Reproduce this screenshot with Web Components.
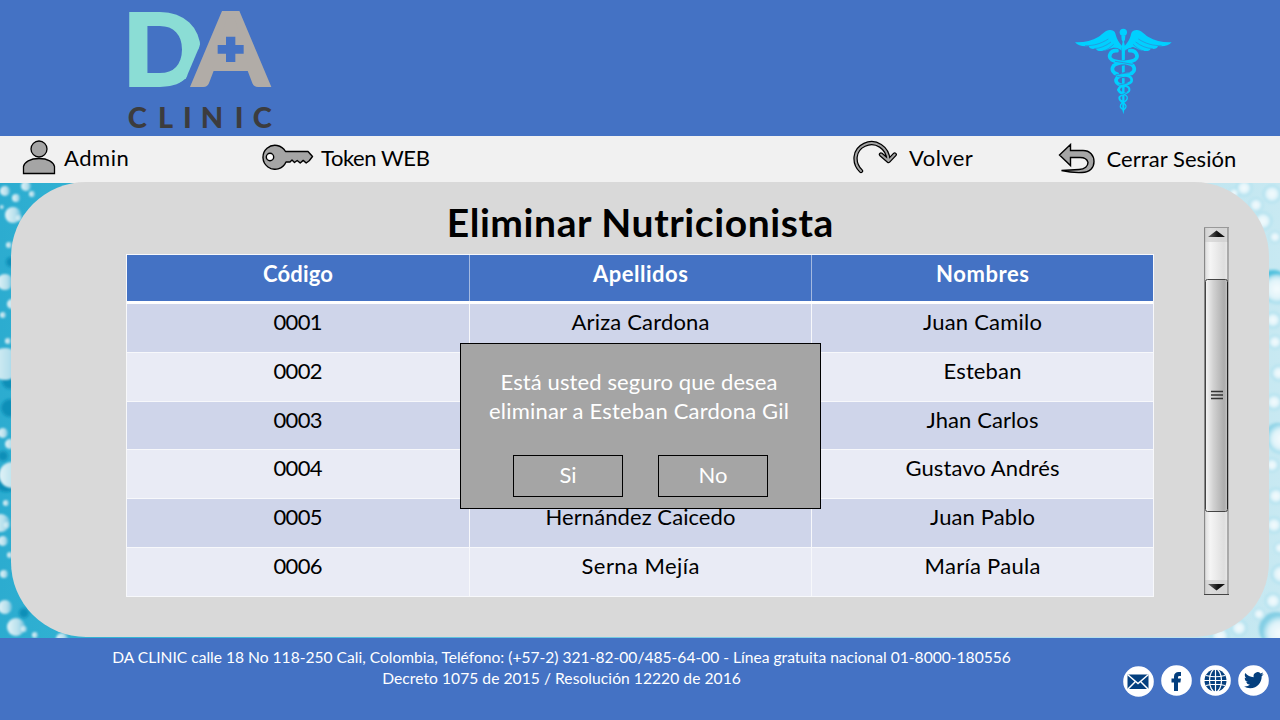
<!DOCTYPE html>
<html lang="es">
<head>
<meta charset="utf-8">
<title>DA Clinic – Eliminar Nutricionista</title>
<style>
html,body{margin:0;height:100%;overflow:hidden}
body{font-family:Lato,"Open Sans",sans-serif;font-size:22px;color:#000}
</style>
</head>
<body>
<clinic-page></clinic-page>
<script>
const define = (name, html, init) => customElements.define(name, class extends HTMLElement {
  connectedCallback() {
    if (this.shadowRoot) return;
    const t = document.createElement('template');
    t.innerHTML = typeof html === 'function' ? html(this) : html;
    this.attachShadow({mode: 'open'}).append(t.content.cloneNode(true));
    if (init) init(this);
  }
});

/* One line of text, tracked to a given width. */
define('fit-text', el => `<style>:host{display:inline-block;white-space:pre}span{display:inline-block}</style><span>${el.getAttribute('text')}</span>`, el => {
  const s = el.shadowRoot.querySelector('span');
  const em = parseFloat(getComputedStyle(s).fontSize);
  const n = el.getAttribute('text').length;
  const ls = (+el.getAttribute('w') + em * .04 - s.getBoundingClientRect().width) / (n - 1);
  s.style.letterSpacing = ls + 'px';
  s.style.marginRight = -ls + 'px';
});

define('clinic-logo', `<style>:host{display:block;width:180px;height:136px}svg{display:block;overflow:visible}text{font-family:Lato,sans-serif;font-weight:900}</style>
<svg width="180" height="136" viewBox="0 0 540 408">
<defs><clipPath id="cut"><path d="M40 20H300L268 140 228 235 190 264 150 280H40Z"/></clipPath></defs>
<g clip-path="url(#cut)"><text transform="translate(37 259) scale(1.045 1)" font-size="305" fill="#8bddd5" stroke="#8bddd5" stroke-width="6">D</text></g>
<text x="243" y="262" font-size="313" textLength="238" lengthAdjust="spacingAndGlyphs" fill="#b1aca7">A</text>
<path fill="#b1aca7" d="M350 55H374L420 213H305Z"/>
<path fill="#4472c4" d="M348 110h28v25h25v26h-25v25h-28v-25h-25v-26h25z"/>
<g font-size="87" fill="#3c3c3e"><text x="53" y="384">C</text><text x="144" y="384">L</text><text x="219" y="384">I</text><text x="272" y="384">N</text><text x="374" y="384">I</text><text x="428" y="384">C</text></g>
</svg>`);

define('caduceus-mark', `<style>:host{display:block;width:130px;height:110px}svg{display:block}</style>
<svg width="130" height="110" viewBox="0 0 390 330">
<g fill="#00d0ff"><circle cx="190" cy="52" r="11"/><path d="M184 62h12l-1 12-3 6 3 14-2 190-3 14-3-14-2-190 3-14-3-6z"/>
<g id="wing"><path d="M186 93C176 81 171 72 168 62c-2-11-6-16-17-17-15-1-22 12-35 20-21 13-44 18-71 17 8 10 24 13 41 11 1 8 12 10 22 8 2 7 11 9 23 6 14-2 20-9 33-9 12 0 18 6 20 9z"/>
<path d="M75 92c27 0 46-5 70-20M101 101c20-1 36-8 52-20M128 108c14-3 22-10 33-20" fill="none" stroke="#4472c4" stroke-width="1.600"/></g>
<use href="#wing" transform="matrix(-1 0 0 1 380 0)"/></g>
<g fill="none" stroke-linecap="round">
<g stroke="#4472c4" stroke-width="16"><path d="M219 104c14 5 17 23 4 31-18 9-48 7-59 17"/><path d="M211 150c14 4 15 18 4 24-15 7-37 6-44 15"/></g>
<g stroke="#00d0ff" stroke-width="11">
<path d="M171 107c-19-3-29 17-16 27 15 10 52 6 64 18 9 12 1 23-11 25-18 4-36 3-40 17-1 12 14 17 22 18"/>
<path d="M209 107c19-3 29 17 16 27-15 10-52 6-64 18-9 12-1 23 11 25"/></g>
<g stroke="#00d0ff" stroke-width="8"><path d="M187 179c15 2 30 6 28 18-2 13-36 10-39 26 0 10 10 12 16 13"/><path d="M185 210c14 2 25 5 23 16s-28 10-30 22c0 8 7 11 12 12" stroke-width="6"/><path d="M173 224c5 13 29 12 29 25 0 11-15 12-20 20-4 9 4 13 9 15" stroke-width="4"/><path d="M183 260c8 4 16 7 15 15-1 6-5 8-8 10" stroke-width="4"/></g>
<g stroke="#4472c4" stroke-width="2"><path d="M166 139q25 4 51 9M168 179q22-4 40-6M172 184q23 4 35 9M177 210q17-3 25-6M178 240q12 0 22-8"/></g></g>
</svg>`);

const icons = {
 user: [34, 36, '<g fill="#a5a5a5" stroke="#000" stroke-width="1.3"><circle cx="17" cy="9" r="8"/><path d="M1.500 33.500V26.500C2.500 22 8 18.500 17 18.500S31.500 22 32.500 26.500V33.500Z"/></g>'],
 key: [52, 26, '<path fill="#a5a5a5" stroke="#000" stroke-width="1.4" stroke-linejoin="round" d="M23.500 7.500A12 12 0 1 0 24 18H28l2-2 2.500 2.500 2.700-2 3 2.500 3-2.600 3 2.600 3-2.200L50.500 12.500 46 7.500Z"/><circle cx="8" cy="13" r="3.700" fill="#fff" stroke="#000" stroke-width="1.4"/>'],
 redo: [46, 36, '<g fill="none" stroke-linecap="round" stroke-linejoin="round"><path stroke="#000" stroke-width="4.400" d="M9 31C1 23 1.500 10 12.500 4.800S36 7.500 36.500 20.500M29 14.500 36.500 21 42.700 14.500"/><path stroke="#a5a5a5" stroke-width="1.900" d="M9 31C1 23 1.500 10 12.500 4.800S36 7.500 36.500 20.500M29 14.500 36.500 21 42.700 14.500"/></g>'],
 undo: [38, 32, '<path fill="#a5a5a5" stroke="#000" stroke-width="1.400" d="M1.500 12 12.500 1.500V7.500H25C32 7.500 36 12.500 36 18.500S32 29.500 24 29.500Q14 30 3.500 27.500L21 26.500C27 26.500 30 23 30 19.500 29 15.500 26 14.500 22 14.500H12.500V22.500Z"/>']
};
define('menu-item', el => { const [w, h, d] = icons[el.getAttribute('icon')];
 return `<style>:host{display:flex;align-items:flex-start;height:100%}svg{display:block;flex:none;margin-top:var(--it,3px)}div{margin-left:var(--gap,8px);padding-top:var(--tt,7px);line-height:30px;height:30px}</style>
 <svg width="${w}" height="${h}" viewBox="0 0 ${w} ${h}">${d}</svg><div><fit-text w="${el.getAttribute('w')}" text="${el.getAttribute('text')}"></fit-text></div>`; });

define('clinic-nav', `<style>:host{display:grid;grid-template-columns:240px 590px 206px 1fr;height:47px;padding-left:22px;background:#f1f1f1;box-sizing:border-box}</style>
<menu-item icon="user" text="Admin" w="64" style="--it:4px"></menu-item>
<menu-item icon="key" text="Token WEB" w="108" style="--it:8px;--gap:7px"></menu-item>
<menu-item icon="redo" text="Volver" w="63" style="--it:4px;--gap:11px"></menu-item>
<menu-item icon="undo" text="Cerrar Sesión" w="129" style="--it:7px;--gap:10.500px;--tt:8px"></menu-item>`);

/* Droplets on a teal-to-pale water surface. */
define('water-backdrop', el => {
 const drop = (x, y, r, side) => `<circle cx="${x}" cy="${y}" r="${r}" fill="url(#${side})"/>`;
 const left = [[5,8,5],[26,3,5],[16,15,4],[32,11,3],[13,32,8],[19,35,3],[2,24,2],[9,62,3],[5,99,8],[12,121,5],[3,132,3],[8,158,3],[5,181,16],[3,250,5],[10,261,5],[12,292,13],[6,320,3],[1,340,9],[7,342,3],[3,358,5],[10,372,3],[4,391,4],[5,424,7],[16,444,9],[24,446,3],[35,452,3],[62,456,6]];
 const right = [[1244,5,8],[1256,22,7],[1234,10,5],[1272,11,9],[1263,38,9],[1275,54,6],[1277,106,15],[1273,137,8],[1275,159,7],[1279,190,8],[1274,219,8],[1282,256,15],[1272,282,7],[1276,313,8],[1274,342,8],[1280,365,6],[1281,391,10],[1273,418,8],[1259,431,6],[1280,450,17],[1239,445,8],[1220,453,9]];
 return `<style>:host{display:block}svg{display:block}</style>
<svg width="1280" height="455" viewBox="0 0 1280 455"><defs>
<linearGradient id="bg"><stop offset="0" stop-color="#2cacd0"/><stop offset=".1" stop-color="#35b5d4"/><stop offset=".85" stop-color="#b3e0ee"/><stop offset="1" stop-color="#c8e9f2"/></linearGradient>
<linearGradient id="l" x2="1"><stop stop-color="#e2f3f8"/><stop offset=".65" stop-color="#b5dfec"/><stop offset="1" stop-color="#66bedb"/></linearGradient>
<radialGradient id="r"><stop stop-color="#f6fcfe"/><stop offset=".65" stop-color="#dff3f9"/><stop offset="1" stop-color="#98d8ea"/></radialGradient>
<filter id="b"><feGaussianBlur stdDeviation=".9"/></filter><filter id="b2"><feGaussianBlur stdDeviation="1.5"/></filter></defs>
<path fill="url(#bg)" d="M0 0H1280V455H0Z"/>
<g fill="#0d8fb8" filter="url(#b2)"><circle cx="11" cy="79" r="5"/><circle cx="10" cy="198" r="8"/><circle cx="10" cy="225" r="9"/><circle cx="6" cy="297" r="12"/><circle cx="24" cy="430" r="5"/><circle cx="3" cy="273" r="5"/></g>
<circle cx="1273" cy="102" r="15" fill="#4bbfdd" filter="url(#b2)"/><circle cx="1277" cy="252" r="12" fill="#8fd3e6" filter="url(#b2)"/><circle cx="1276" cy="446" r="17" fill="#83cee4" filter="url(#b2)"/>
<g filter="url(#b)">${left.map(c => drop(...c, 'l')).join('')}</g><g filter="url(#b2)">${right.map(c => drop(...c, 'r')).join('')}</g></svg>`; });

define('data-cell', el => { const t = el.getAttribute('text'); return `<style>:host{display:block;text-align:center;line-height:30px;padding-top:var(--pt,3px);box-sizing:border-box;min-width:0;overflow:hidden}</style>${t ? `<fit-text w="${el.getAttribute('w')}" text="${t}"></fit-text>` : ''}`; });

const rows = [
 [['Ariza Cardona',137],['Juan Camilo',118]], [null,['Esteban',77]], [null,['Jhan Carlos',111]],
 [null,['Gustavo Andrés',153]], [['Hernández Caicedo',189],['Juan Pablo',104]], [['Serna Mejía',117],['María Paula',115]]
];
const cell = c => c ? `<data-cell text="${c[0]}" w="${c[1]}"></data-cell>` : '<data-cell></data-cell>';
define('data-table', `<style>:host{display:block;border:1px solid #f7f8fb;box-sizing:border-box;width:1028px;height:343px;background:#f7f8fb}
.r{display:grid;grid-template-columns:342px 341px 341px;column-gap:1px}
.h{font-weight:bold;color:#fff;background:#a4b9e0;border-bottom:3px solid #fff;--pt:4px}.h data-cell{background:#4472c4;height:46px}
.b{display:grid;grid-template-rows:repeat(6,1fr);row-gap:1px;height:292px}.b data-cell{background:#cfd5ea}.b .r:nth-child(even) data-cell{background:#e9ebf5}</style>
<div class="r h">${cell(['Código',69])}${cell(['Apellidos',94])}${cell(['Nombres',92])}</div>
<div class="b">${rows.map((r, i) => `<div class="r">${cell(['000' + (i + 1), 48])}${cell(r[0])}${cell(r[1])}</div>`).join('')}</div>`);

define('scroll-rail', `<style>:host{display:block;width:25px;height:368px}svg{display:block}</style>
<svg width="25" height="368" viewBox="0 0 25 368"><defs><linearGradient id="t"><stop stop-color="#d8d8d8"/><stop offset=".25" stop-color="#f5f5f5"/><stop offset=".8" stop-color="#dedede"/><stop offset="1" stop-color="#eee"/></linearGradient>
<linearGradient id="k"><stop stop-color="#f5f5f5"/><stop offset=".35" stop-color="#d2d2d2"/><stop offset=".85" stop-color="#adadad"/><stop offset="1" stop-color="#c5c5c5"/></linearGradient><linearGradient id="a"><stop stop-color="#666"/><stop offset=".6" stop-color="#111"/></linearGradient></defs>
<path fill="url(#t)" d="M0 0h25v368H0z"/><path fill="#ccc" opacity=".6" d="M1 1h23v14H1zM1 353h23v14H1z"/><path d="M.5 0V368M24 0V368" stroke="#888" stroke-width="1.300"/><path d="M0 .5H25" stroke="#999"/><path d="M0 367.500H25" stroke="#444"/>
<rect x="1.500" y="52.500" width="22" height="232" rx="2" fill="url(#k)" stroke="#444"/><path d="M23.500 55V282" stroke="#222"/>
<path fill="url(#a)" d="M4 10 12.500 3.500 21 10zM4 357l8.500 6.500L21 357z"/><path stroke="#333" stroke-width="1.300" d="M7 164.500h12M7 168h12M7 171.500h12"/></svg>`);

define('choice-button', el => `<style>:host{display:block;box-sizing:border-box;width:110px;height:42px;border:1px solid #000;text-align:center;line-height:30px;padding-top:4px}</style><fit-text w="${el.getAttribute('w')}" text="${el.getAttribute('text')}"></fit-text>`);
define('confirm-dialog', `<style>:host{display:block;box-sizing:border-box;width:361px;height:166px;border:1px solid #000;background:#a5a5a5;color:#fff;text-align:center;padding-top:23px}
p{margin:0 3px 0 0;line-height:29px;height:29px}.a{display:flex;justify-content:center;gap:35px;margin-top:30px}</style>
<p><fit-text w="276" text="Está usted seguro que desea"></fit-text></p><p><fit-text w="299" text="eliminar a Esteban Cardona Gil"></fit-text></p>
<div class="a"><choice-button w="16" text="Si"></choice-button><choice-button w="28" text="No"></choice-button></div>`);

define('work-panel', `<style>:host{display:block;position:relative;box-sizing:border-box;margin:-1px 11px 0;height:455px;border-radius:75px;background:#d9d9d9;padding-left:115px}
.g{display:flex;gap:50px}h1{margin:0;padding-top:16px;height:56px;line-height:48px;font-size:39px;text-align:center;font-weight:bold}scroll-rail{margin-top:45px}.c{width:1028px}
confirm-dialog{position:absolute;left:449px;top:161px}</style>
<div class="g"><div class="c"><h1><fit-text w="385" text="Eliminar Nutricionista"></fit-text></h1><data-table></data-table></div><scroll-rail></scroll-rail></div><confirm-dialog></confirm-dialog>`);

const social = {
 mail: '<path fill="#043f7e" d="M4.500 8.500h21v14.500h-21z"/><path fill="none" stroke="#fff" stroke-width="1.500" d="m4.500 8.500 10.500 9L25.500 8.500M4.500 23.500l7.500-7.500M25.500 23.500 18 16"/>',
 face: '<path fill="#043f7e" d="M13 26V17.500h-2.500V13.500H13V11.500C13 8.500 15 7 17.500 7H20v4h-1.700q-1.300 0-1.300 1.300V13.500H20l-.6 4H17V26Z"/>',
 globe: '<circle cx="15.500" cy="15.500" r="11" fill="#043f7e"/><path fill="none" stroke="#fff" stroke-width="1.200" d="M15.500 4V27M4 15.500H27M6 10.500Q15.500 13 25 10.500M6 20.500Q15.500 18 25 20.500"/><ellipse cx="15.500" cy="15.500" rx="6" ry="11.500" fill="none" stroke="#fff" stroke-width="1.200"/>',
 bird: '<path fill="#043f7e" transform="translate(6 7) scale(.82)" d="M23.950 2.570a10 10 0 0 1-2.820.77 4.960 4.960 0 0 0 2.160-2.720c-.950.560-2 .960-3.120 1.180a4.920 4.920 0 0 0-8.390 4.480C7.690 6.100 4.070 4.130 1.640 1.160a4.820 4.820 0 0 0-.67 2.480c0 1.710.870 3.210 2.190 4.100a4.900 4.900 0 0 1-2.230-.62v.06a4.920 4.920 0 0 0 3.950 4.830 5 5 0 0 1-2.210.08 4.940 4.940 0 0 0 4.600 3.420A9.870 9.870 0 0 1 0 17.540a14 14 0 0 0 7.550 2.210c9.050 0 14-7.500 14-13.990 0-.21 0-.42-.02-.63a9.940 9.940 0 0 0 2.420-2.560z"/>'
};
define('social-icon', el => `<style>:host{display:block;width:31px;height:31px}svg{display:block}</style><svg width="31" height="31" viewBox="0 0 31 31"><circle cx="15.500" cy="15.500" r="15.300" fill="#fff"/>${social[el.getAttribute('kind')]}</svg>`);
define('clinic-footer', `<style>:host{display:flex;height:82px;background:#4472c4;color:#fff;box-sizing:border-box;padding:9px 11px 0 112px;font-size:15.600px}
.t{width:899px;text-align:center}p{margin:0;line-height:21px;height:21px}nav{display:flex;gap:7.500px;margin:18px 0 0 auto}social-icon:first-child{margin-top:1px}social-icon:nth-child(-n+3){margin-left:-.300px}</style>
<div class="t"><p><fit-text w="898" text="DA CLINIC calle 18 No 118-250 Cali, Colombia, Teléfono: (+57-2) 321-82-00/485-64-00 - Línea gratuita nacional 01-8000-180556"></fit-text></p><p><fit-text w="358" text="Decreto 1075 de 2015 / Resolución 12220 de 2016"></fit-text></p></div>
<nav><social-icon kind="mail"></social-icon><social-icon kind="face"></social-icon><social-icon kind="globe"></social-icon><social-icon kind="bird"></social-icon></nav>`);

define('clinic-page', `<style>:host{display:grid;grid-template-rows:136px 47px 455px 82px;grid-template-columns:1280px;height:720px;overflow:hidden}
header{display:flex;justify-content:space-between;background:#4472c4;padding:0 90px 0 110px}caduceus-mark{margin-top:15px}
main{display:grid;grid-template:455px / 1280px}water-backdrop,work-panel{grid-area:1/1}</style>
<header><clinic-logo></clinic-logo><caduceus-mark></caduceus-mark></header><clinic-nav></clinic-nav>
<main><water-backdrop></water-backdrop><work-panel></work-panel></main><clinic-footer></clinic-footer>`);
</script>
</body>
</html>
